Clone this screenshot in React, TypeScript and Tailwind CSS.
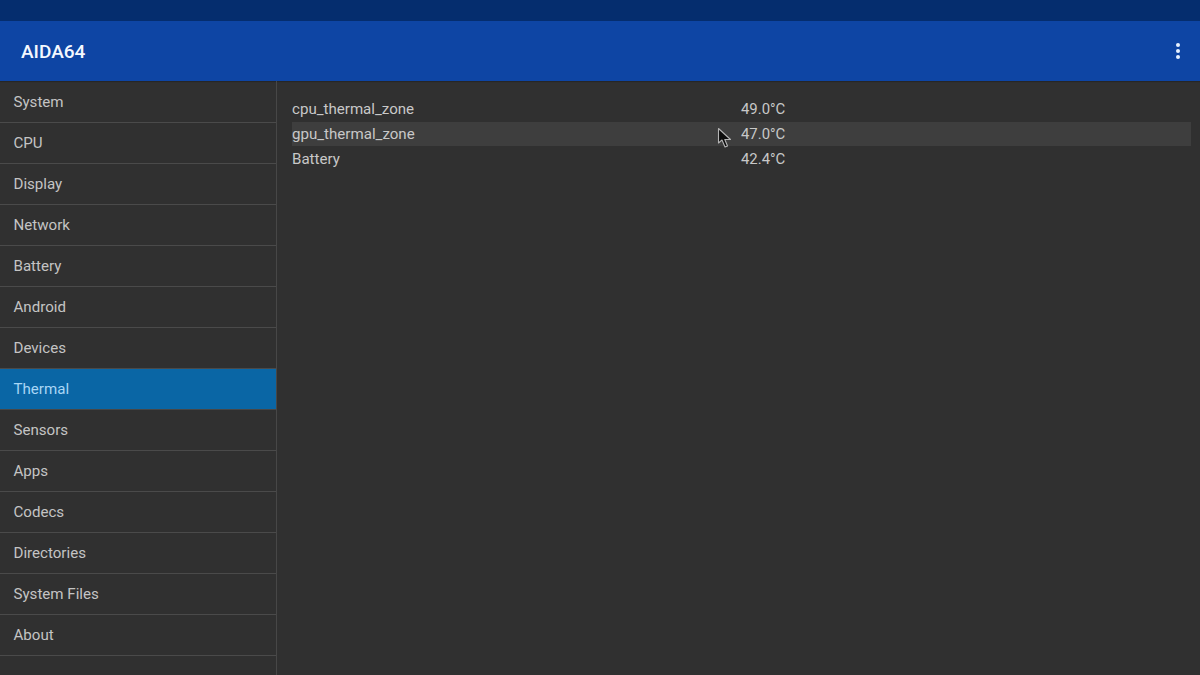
import React from "react";

const items = ["System","CPU","Display","Network","Battery","Android","Devices","Thermal","Sensors","Apps","Codecs","Directories","System Files","About"];
const rows = [["cpu_thermal_zone","49.0°C"],["gpu_thermal_zone","47.0°C"],["Battery","42.4°C"]];

export default function App() {
  return (
    <div className="w-[1200px] h-[675px] overflow-hidden flex flex-col bg-[#303030] font-['Roboto',sans-serif]">
      <div className="h-[21px] bg-[#052d6e] shrink-0" />
      <header className="h-[60px] shrink-0 bg-[#0e45a4] flex items-center justify-between pl-[21px] pr-[19px] shadow-[0_1px_1px_rgba(0,0,0,0.2)]">
        <span className="text-[#f4f8ff] text-[19px] font-medium pt-[2px]">AIDA64</span>
        <div className="flex flex-col gap-[2px] pr-px">
          <span className="w-[4px] h-[4px] rounded-full bg-[#e8f2ff]" />
          <span className="w-[4px] h-[4px] rounded-full bg-[#e8f2ff]" />
          <span className="w-[4px] h-[4px] rounded-full bg-[#e8f2ff]" />
        </div>
      </header>
      <div className="flex-1 flex min-h-0">
        <aside className="w-[277px] shrink-0 border-r border-[#474747] pt-px">
          {items.map((t) => (
            <div key={t} className={t === "Thermal"
              ? "h-[41px] flex items-center pl-[13.5px] text-[15.1px] bg-[#0a66a5] text-[#a9d6f5] border-b border-[#474747]"
              : "h-[41px] flex items-center pl-[13.5px] text-[15.1px] text-[#c4c4c4] border-b border-[#4a4a4a]"}>{t}</div>
          ))}
        </aside>
        <main className="flex-1 pt-[16px] pl-[15px] pr-[9px] relative">
          {rows.map(([a, b], i) => (
            <div key={a} className={i === 1
              ? "h-[24px] mb-px pt-[2px] flex items-center text-[15.1px] text-[#c8c8c8] bg-[#3e3e3e]"
              : "h-[24px] mb-px pt-[2px] flex items-center text-[15.1px] text-[#c8c8c8]"}>
              <div className="flex items-baseline -mt-px">
                <span className="w-[449px] shrink-0">{a}</span>
                <span className="text-[14.9px]">{b}</span>
              </div>
            </div>
          ))}
          <svg className="absolute left-[440px] top-[46px]" width="16" height="22" viewBox="0 0 16 22">
            <path d="M1.5 1.5 L1.5 16 L5 13 L8 20 L10.5 19 L7.8 12.5 L13.5 12.5 Z" fill="#0c0c0c" stroke="#b4b4b4" strokeWidth="1.1" strokeLinejoin="round" />
          </svg>
        </main>
      </div>
    </div>
  );
}
